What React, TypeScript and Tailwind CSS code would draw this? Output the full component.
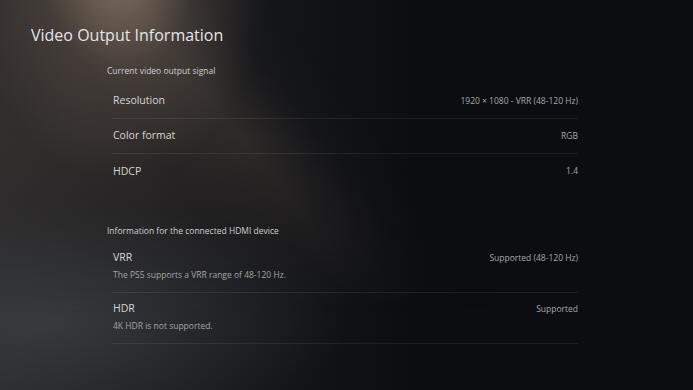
const signalRows = [
  { label: 'Resolution', value: '1920 × 1080 - VRR (48-120 Hz)' },
  { label: 'Color format', value: 'RGB' },
  { label: 'HDCP', value: '1.4' },
];

const deviceRows = [
  { label: 'VRR', value: 'Supported (48-120 Hz)', desc: 'The PS5 supports a VRR range of 48-120 Hz.' },
  { label: 'HDR', value: 'Supported', desc: '4K HDR is not supported.' },
];

const App = () => {
  return (
    <div
      className="relative w-[693px] h-[390px] overflow-hidden bg-[#0b0d11] text-[#d9dbdc]"
      style={{ fontFamily: '"Open Sans", "Noto Sans", sans-serif' }}
    >
      {/* cool haze on the left side */}
      <div className="absolute inset-0 bg-[radial-gradient(ellipse_300px_120px_at_50px_320px,rgba(78,86,90,0.45)_0%,transparent_100%),linear-gradient(90deg,rgba(48,48,50,0.75)_0%,rgba(40,40,42,0.45)_30%,transparent_60%)]" />
      {/* spotlight beam from the top */}
      <div className="absolute inset-0 [mask-image:linear-gradient(to_bottom,black_35%,transparent_80%)] bg-[radial-gradient(ellipse_150px_210px_at_120px_-30px,rgba(170,146,126,0.65)_0%,rgba(120,102,88,0.3)_50%,transparent_100%),linear-gradient(52deg,transparent_34%,rgba(130,112,98,0.14)_44%,transparent_52%),linear-gradient(52deg,rgba(62,55,51,0.6)_0%,rgba(60,52,48,0.5)_30%,rgba(54,46,42,0.38)_42%,rgba(40,36,34,0.2)_50%,transparent_58%)]" />

      <div className="relative">
        <h1 className="pl-[31px] pt-[23px] text-[16px] leading-[24px] text-[#e2e6e8]">
          Video Output Information
        </h1>

        <div className="ml-[107px] mt-[18px] text-[8.5px] leading-[12px] text-[#d0d0d0]">
          Current video output signal
        </div>

        <div className="ml-[112px] w-[466px] mt-[7px]">
          {signalRows.map((row, i) => (
            <div
              key={row.label}
              className={`flex items-center justify-between h-[35px] ${i < signalRows.length - 1 ? 'border-b border-white/[0.07]' : ''}`}
            >
              <span className="pl-px text-[10.5px] text-[#d6d6d6]">{row.label}</span>
              <span className="text-[8.5px] text-[#a8a8a8]">{row.value}</span>
            </div>
          ))}
        </div>

        <div className="ml-[107px] mt-[36px] text-[8.5px] leading-[12px] text-[#d0d0d0]">
          Information for the connected HDMI device
        </div>

        <div className="ml-[112px] w-[466px] mt-[5px]">
          {deviceRows.map((row) => (
            <div key={row.label} className="h-[51px] border-b border-white/[0.07] pt-[8px]">
              <div className="flex items-center justify-between h-[16px]">
                <span className="pl-px text-[10.5px] text-[#d6d6d6]">{row.label}</span>
                <span className="text-[8.5px] text-[#a8a8a8]">{row.value}</span>
              </div>
              <div className="pl-px mt-[1px] text-[8.5px] leading-[16px] text-[#a4a4a4]">{row.desc}</div>
            </div>
          ))}
        </div>
      </div>
    </div>
  );
};

export default App;
